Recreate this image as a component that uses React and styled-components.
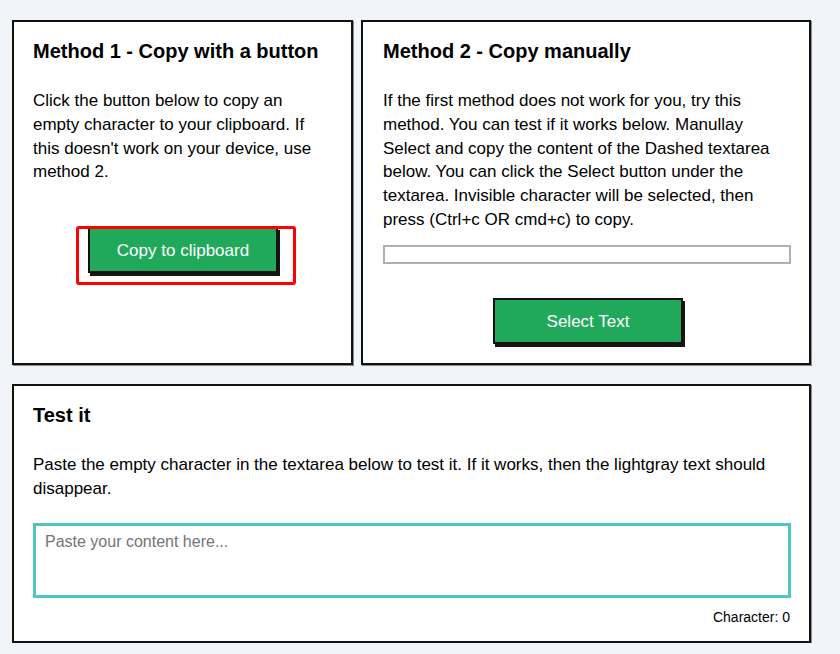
import React, { useState } from "react";
import styled, { createGlobalStyle } from "styled-components";

const GlobalStyle = createGlobalStyle`
  html, body {
    margin: 0;
    padding: 0;
    background: #f1f4f9;
    font-family: "Liberation Sans", Arial, sans-serif;
    color: #000;
  }
`;

const Page = styled.div`
  width: 799px;
  padding: 20px 0 0 12px;
  display: flex;
  flex-direction: column;
  gap: 19px;
`;

const Row = styled.div`
  display: grid;
  grid-template-columns: 341px 450px;
  gap: 8px;
`;

const Card = styled.section`
  background: #fff;
  border: 2px solid #111;
  box-shadow: 1px 1px 0 #8a8a8a;
  padding: 17px 18px ${(p) => p.$padBottom || "19px"} ${(p) => p.$padLeft || "19px"};
  display: flex;
  flex-direction: column;
`;

const Title = styled.h2`
  margin: 0;
  font-size: 20px;
  line-height: 24px;
  font-weight: bold;
`;

const Text = styled.p`
  margin: 26px 0 0;
  font-size: 17px;
  line-height: 1.4;
`;

const ButtonSlot = styled.div`
  display: flex;
  justify-content: center;
  margin-top: ${(p) => p.$top};
  padding-left: ${(p) => p.$shift || "0"};
`;

const Highlight = styled.div`
  position: relative;
  &::after {
    content: "";
    position: absolute;
    top: -1px;
    left: -12px;
    right: -18px;
    bottom: -12px;
    border: 3px solid #ff0000;
    border-radius: 3px;
    pointer-events: none;
  }
`;

const GreenButton = styled.button`
  width: 190px;
  height: 46px;
  box-sizing: border-box;
  border: 2px solid #111;
  box-shadow: 2px 3px 0 #161616;
  background: #21a95b;
  color: #fff;
  font-family: "Liberation Sans", Arial, sans-serif;
  font-size: 17px;
  cursor: pointer;
  padding: 2px 0 0;
`;

const HiddenArea = styled.textarea`
  display: block;
  margin-top: 13px;
  box-sizing: border-box;
  width: 100%;
  height: 19px;
  border: 2px solid #b0b0b0;
  padding: 0 4px;
  resize: none;
  outline: none;
  font-family: "Liberation Sans", Arial, sans-serif;
  font-size: 12px;
  overflow: hidden;
`;

const TestArea = styled.textarea`
  display: block;
  margin-top: 23px;
  box-sizing: border-box;
  width: 100%;
  height: 75px;
  border: 3px solid #4ec6c6;
  padding: 7px 9px;
  resize: none;
  outline: none;
  font-family: "Liberation Sans", Arial, sans-serif;
  font-size: 16px;
  line-height: 18px;
  color: #000;
  &::placeholder {
    color: #757575;
  }
`;

const Counter = styled.div`
  margin-top: 11px;
  text-align: right;
  font-size: 14px;
  line-height: 16px;
  padding-right: 1px;
`;

export default function App() {
  const [value, setValue] = useState("");
  return (
    <>
      <GlobalStyle />
      <Page>
        <Row>
          <Card>
            <Title>Method 1 - Copy with a button</Title>
            <Text>
              Click the button below to copy an empty character to your
              clipboard. If this doesn't work on your device, use method 2.
            </Text>
            <ButtonSlot $top="43px">
              <Highlight>
                <GreenButton>Copy to clipboard</GreenButton>
              </Highlight>
            </ButtonSlot>
          </Card>
          <Card $padLeft="20px">
            <Title>Method 2 - Copy manually</Title>
            <Text>
              If the first method does not work for you, try this method. You
              can test if it works below. Manullay Select and copy the content
              of the Dashed textarea below. You can click the Select button
              under the textarea. Invisible character will be selected, then
              press (Ctrl+c OR cmd+c) to copy.
            </Text>
            <HiddenArea readOnly defaultValue={"\u3164"} />
            <ButtonSlot $top="34px" $shift="2px">
              <GreenButton>Select Text</GreenButton>
            </ButtonSlot>
          </Card>
        </Row>
        <Card $padBottom="16px">
          <Title>Test it</Title>
          <Text>
            Paste the empty character in the textarea below to test it. If it
            works, then the lightgray text should disappear.
          </Text>
          <TestArea
            placeholder="Paste your content here..."
            value={value}
            onChange={(e) => setValue(e.target.value)}
          />
          <Counter>Character: {value.length}</Counter>
        </Card>
      </Page>
    </>
  );
}
